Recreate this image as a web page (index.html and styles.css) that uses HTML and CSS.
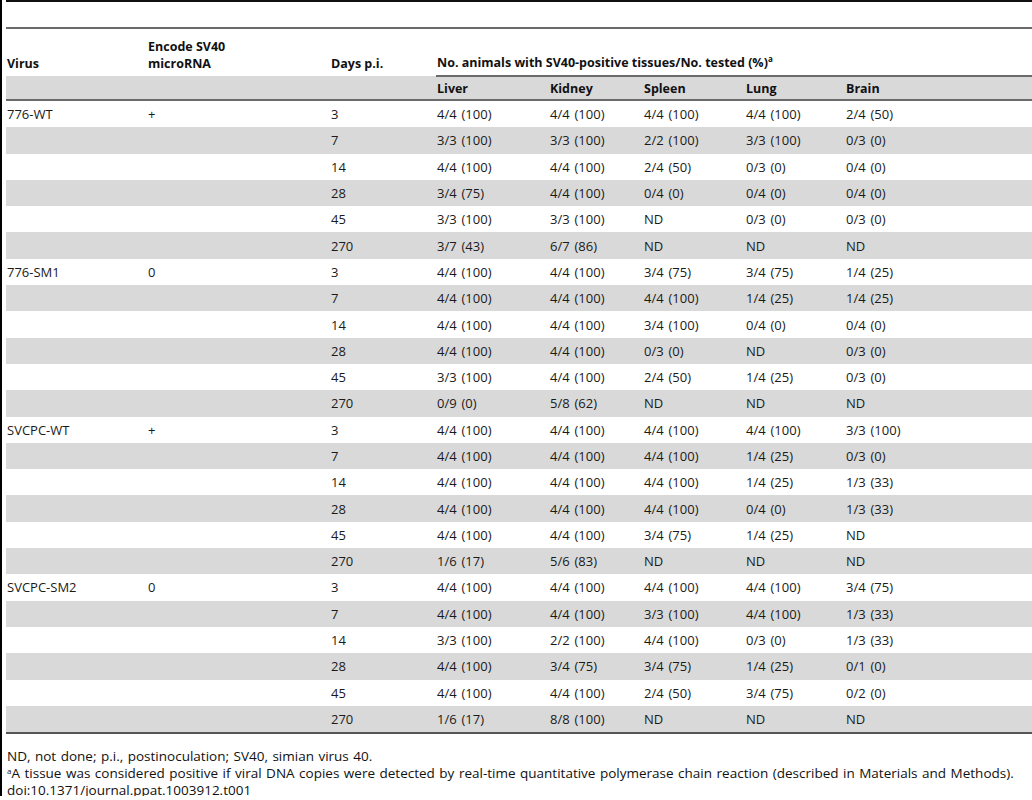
FILE: index.html
```html
<!DOCTYPE html>
<html>
<head>
<meta charset="utf-8">
<link rel="stylesheet" href="styles.css">
</head>
<body>
<div class="frame">
  <div class="title-band"></div>
  <table class="data">
    <colgroup>
      <col class="c-virus"><col class="c-enc"><col class="c-days">
      <col class="c-liver"><col class="c-kidney"><col class="c-spleen"><col class="c-lung"><col class="c-brain">
    </colgroup>
    <thead>
      <tr class="head">
        <th>Virus</th>
        <th>Encode SV40<br>microRNA</th>
        <th>Days p.i.</th>
        <th colspan="5" class="span">No. animals with SV40-positive tissues/No. tested (%)<sup>a</sup></th>
      </tr>
      <tr class="sub">
        <th></th><th></th><th></th>
        <th>Liver</th><th>Kidney</th><th>Spleen</th><th>Lung</th><th>Brain</th>
      </tr>
    </thead>
    <tbody>
      <tr><td>776-WT</td><td>+</td><td>3</td><td>4/4 (100)</td><td>4/4 (100)</td><td>4/4 (100)</td><td>4/4 (100)</td><td>2/4 (50)</td></tr>
      <tr class="alt"><td></td><td></td><td>7</td><td>3/3 (100)</td><td>3/3 (100)</td><td>2/2 (100)</td><td>3/3 (100)</td><td>0/3 (0)</td></tr>
      <tr><td></td><td></td><td>14</td><td>4/4 (100)</td><td>4/4 (100)</td><td>2/4 (50)</td><td>0/3 (0)</td><td>0/4 (0)</td></tr>
      <tr class="alt"><td></td><td></td><td>28</td><td>3/4 (75)</td><td>4/4 (100)</td><td>0/4 (0)</td><td>0/4 (0)</td><td>0/4 (0)</td></tr>
      <tr><td></td><td></td><td>45</td><td>3/3 (100)</td><td>3/3 (100)</td><td>ND</td><td>0/3 (0)</td><td>0/3 (0)</td></tr>
      <tr class="alt"><td></td><td></td><td>270</td><td>3/7 (43)</td><td>6/7 (86)</td><td>ND</td><td>ND</td><td>ND</td></tr>
      <tr><td>776-SM1</td><td>0</td><td>3</td><td>4/4 (100)</td><td>4/4 (100)</td><td>3/4 (75)</td><td>3/4 (75)</td><td>1/4 (25)</td></tr>
      <tr class="alt"><td></td><td></td><td>7</td><td>4/4 (100)</td><td>4/4 (100)</td><td>4/4 (100)</td><td>1/4 (25)</td><td>1/4 (25)</td></tr>
      <tr><td></td><td></td><td>14</td><td>4/4 (100)</td><td>4/4 (100)</td><td>3/4 (100)</td><td>0/4 (0)</td><td>0/4 (0)</td></tr>
      <tr class="alt"><td></td><td></td><td>28</td><td>4/4 (100)</td><td>4/4 (100)</td><td>0/3 (0)</td><td>ND</td><td>0/3 (0)</td></tr>
      <tr><td></td><td></td><td>45</td><td>3/3 (100)</td><td>4/4 (100)</td><td>2/4 (50)</td><td>1/4 (25)</td><td>0/3 (0)</td></tr>
      <tr class="alt"><td></td><td></td><td>270</td><td>0/9 (0)</td><td>5/8 (62)</td><td>ND</td><td>ND</td><td>ND</td></tr>
      <tr><td>SVCPC-WT</td><td>+</td><td>3</td><td>4/4 (100)</td><td>4/4 (100)</td><td>4/4 (100)</td><td>4/4 (100)</td><td>3/3 (100)</td></tr>
      <tr class="alt"><td></td><td></td><td>7</td><td>4/4 (100)</td><td>4/4 (100)</td><td>4/4 (100)</td><td>1/4 (25)</td><td>0/3 (0)</td></tr>
      <tr><td></td><td></td><td>14</td><td>4/4 (100)</td><td>4/4 (100)</td><td>4/4 (100)</td><td>1/4 (25)</td><td>1/3 (33)</td></tr>
      <tr class="alt"><td></td><td></td><td>28</td><td>4/4 (100)</td><td>4/4 (100)</td><td>4/4 (100)</td><td>0/4 (0)</td><td>1/3 (33)</td></tr>
      <tr><td></td><td></td><td>45</td><td>4/4 (100)</td><td>4/4 (100)</td><td>3/4 (75)</td><td>1/4 (25)</td><td>ND</td></tr>
      <tr class="alt"><td></td><td></td><td>270</td><td>1/6 (17)</td><td>5/6 (83)</td><td>ND</td><td>ND</td><td>ND</td></tr>
      <tr><td>SVCPC-SM2</td><td>0</td><td>3</td><td>4/4 (100)</td><td>4/4 (100)</td><td>4/4 (100)</td><td>4/4 (100)</td><td>3/4 (75)</td></tr>
      <tr class="alt"><td></td><td></td><td>7</td><td>4/4 (100)</td><td>4/4 (100)</td><td>3/3 (100)</td><td>4/4 (100)</td><td>1/3 (33)</td></tr>
      <tr><td></td><td></td><td>14</td><td>3/3 (100)</td><td>2/2 (100)</td><td>4/4 (100)</td><td>0/3 (0)</td><td>1/3 (33)</td></tr>
      <tr class="alt"><td></td><td></td><td>28</td><td>4/4 (100)</td><td>3/4 (75)</td><td>3/4 (75)</td><td>1/4 (25)</td><td>0/1 (0)</td></tr>
      <tr><td></td><td></td><td>45</td><td>4/4 (100)</td><td>4/4 (100)</td><td>2/4 (50)</td><td>3/4 (75)</td><td>0/2 (0)</td></tr>
      <tr class="alt last"><td></td><td></td><td>270</td><td>1/6 (17)</td><td>8/8 (100)</td><td>ND</td><td>ND</td><td>ND</td></tr>
    </tbody>
  </table>
  <div class="notes">
    <p>ND, not done; p.i., postinoculation; SV40, simian virus 40.</p>
    <p><sup>a</sup>A tissue was considered positive if viral DNA copies were detected by real-time quantitative polymerase chain reaction (described in Materials and Methods).</p>
    <p>doi:10.1371/journal.ppat.1003912.t001</p>
  </div>
</div>
</body>
</html>
```
FILE: styles.css
```css
html, body {
  margin: 0;
  padding: 0;
  background: #fff;
}
body {
  font-family: "Open Sans", "Noto Sans", sans-serif;
  font-size: 12.5px;
  color: #111;
}
.frame {
  border-left: 2px solid #000;
  padding-left: 4px;
  height: 796px;
}
.title-band {
  border-top: 2px solid #111;
  height: 25px;
}
.data {
  width: 1026px;
  border-collapse: collapse;
  table-layout: fixed;
  border-top: 2px solid #6a6a6a;
  border-bottom: 2px solid #555;
}
.c-virus { width: 141px; }
.c-enc { width: 183px; }
.c-days { width: 106px; }
.c-liver { width: 113px; }
.c-kidney { width: 94px; }
.c-spleen { width: 102px; }
.c-lung { width: 100px; }
.c-brain { width: 187px; }
th, td {
  text-align: left;
  padding: 0 0 0 1px;
  white-space: nowrap;
}
th {
  font-weight: 700;
  color: #111;
}
.head th {
  height: 42px;
  vertical-align: bottom;
  padding-bottom: 4px;
  line-height: 17px;
}
.head th.span {
  border-bottom: 2px solid #6a6a6a;
  padding-bottom: 4px;
}
.head sup {
  font-size: 8px;
  vertical-align: 5px;
  line-height: 0;
}
.sub th {
  background: #d9d9d9;
  height: 22px;
  border-bottom: 2px solid #6a6a6a;
}
td {
  height: 26.3px;
  font-size: 13px;
  word-spacing: 1.5px;
  color: #1a1a1a;
}
.alt td {
  background: #d9d9d9;
}
.notes {
  padding-top: 14px;
  padding-left: 1px;
  font-size: 13.5px;
  word-spacing: 1px;
}
.notes p {
  margin: 0;
  line-height: 17px;
}
.notes sup {
  font-size: 8px;
  vertical-align: 4px;
  line-height: 0;
  word-spacing: 0;
}
```
